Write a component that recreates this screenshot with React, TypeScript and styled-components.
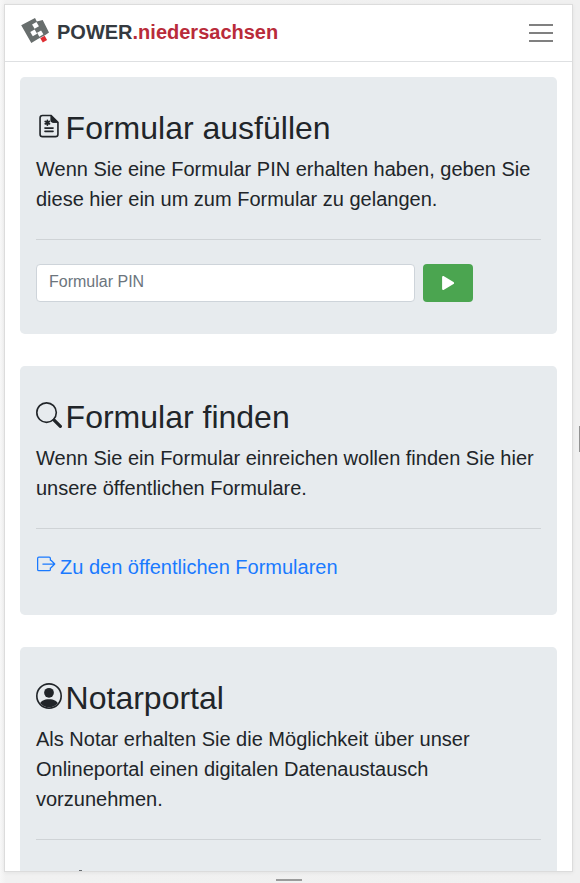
import React from "react";
import styled, { createGlobalStyle } from "styled-components";

const GlobalStyle = createGlobalStyle`
  *, *::before, *::after { box-sizing: border-box; }
  html, body { margin: 0; height: 100%; overflow: hidden; }
  body {
    font-family: "Liberation Sans", Arial, sans-serif;
    font-size: 16px;
    line-height: 1.5;
    color: #212529;
    background: #f0f0f0;
  }
`;

const Stage = styled.div`
  position: relative;
  width: 580px;
  height: 883px;
  padding: 4px 0 0 4px;
  background: linear-gradient(to right, #f7f7f7, #f1f1f1 6px, #f0f0f0 100%);
`;

const Device = styled.div`
  width: 569px;
  height: 868px;
  overflow: hidden;
  background: #fff;
  border: 1px solid #dcdcdc;
  box-shadow: 0 1px 4px rgba(0, 0, 0, 0.06);
`;

const Navbar = styled.header`
  display: flex;
  align-items: flex-start;
  justify-content: space-between;
  height: 57px;
  padding: 11px 19px 0 16px;
  border-bottom: 1px solid #dee0e2;
`;

const Brand = styled.div`
  display: flex;
  align-items: flex-start;
  gap: 8px;
  padding-top: 1px;
  font-size: 20px;
  font-weight: 700;
  line-height: 30px;
  color: #343a40;
`;

const BrandAccent = styled.span`
  color: #b92b3a;
`;

const MenuButton = styled.button`
  display: flex;
  flex-direction: column;
  gap: 6px;
  width: 24px;
  margin-top: 8px;
  padding: 0;
  border: 0;
  background: none;
`;

const MenuBar = styled.span`
  height: 2px;
  background: #808080;
`;

const Content = styled.main`
  padding: 15px 15px 0;
`;

const Panel = styled.section`
  padding: 32px 16px;
  margin-bottom: 32px;
  border-radius: 4.8px;
  background: #e7ebee;
`;

const Title = styled.h2`
  display: flex;
  align-items: flex-start;
  gap: 3.6px;
  margin: 0 0 7px;
  font-size: 32px;
  font-weight: 400;
  line-height: 38px;
`;

const TitleIcon = styled.svg`
  flex: none;
  width: 26px;
  height: 26px;
  margin-top: 4px;
`;

const Lead = styled.p`
  margin: 0;
  padding-bottom: 1px;
  font-size: 20px;
  line-height: 30px;
`;

const Divider = styled.hr`
  margin: 24px 0;
  border: 0;
  border-top: 1px solid #cfd3d6;
`;

const PinForm = styled.form`
  display: flex;
  gap: 8px;
`;

const PinInput = styled.input`
  width: 379px;
  height: 38px;
  padding: 5px 12px 7px;
  border: 1px solid #ced4da;
  border-radius: 4px;
  background: #fff;
  font: inherit;
  line-height: 24px;
  &::placeholder { color: #6c757d; opacity: 1; }
`;

const SubmitButton = styled.button`
  display: flex;
  align-items: center;
  justify-content: center;
  width: 50px;
  height: 38px;
  padding: 0;
  border: 0;
  border-radius: 4px;
  background: #4ba550;
`;

const FormsLink = styled.a`
  display: flex;
  gap: 4px;
  margin-top: -1px;
  padding-bottom: 1px;
  font-size: 20px;
  line-height: 30px;
  color: #1a7aff;
  text-decoration: none;
`;

const LinkIcon = styled.svg`
  flex: none;
  width: 20px;
  height: 20px;
  margin-top: 2px;
`;

const NextRow = styled.div`
  height: 30px;
  padding: 6px 0 0 43px;
`;

const RowTip = styled.span`
  display: block;
  width: 3px;
  height: 1px;
  background: #6a6e72;
`;

const BottomHandle = styled.div`
  position: absolute;
  left: 276px;
  bottom: 2px;
  width: 26px;
  height: 2px;
  background: #9b9b9b;
`;

const SideHandle = styled.div`
  position: absolute;
  right: 0;
  top: 426px;
  width: 1px;
  height: 26px;
  background: #929292;
`;

const Logo = () => (
  <svg width="28" height="28" viewBox="0 0 28 28">
    <path fill="#686e6d" d="M0.200 8.200 L14 1 L15.800 4.600 L21.700 3 L28 15.400 L24 18.200 L17.300 21.800 L10.300 26 Z" />
    <g fill="#fff">
      <rect x="12" y="5.900" width="5" height="5" transform="rotate(-30 14.500 8.400)" />
      <rect x="10.200" y="13.300" width="5" height="5" transform="rotate(-30 12.700 15.800)" />
      <rect x="17" y="14.100" width="4.600" height="4.600" transform="rotate(-30 19.500 16.600)" />
    </g>
    <rect x="20.200" y="19.700" width="5" height="5" transform="rotate(-30 22.700 22.200)" fill="#df2d32" />
  </svg>
);

const DocumentIcon = () => (
  <TitleIcon viewBox="0 0 16 16" fill="currentColor">
    <path fillRule="evenodd" d="M4 1h5.5L14 5.5V13a2 2 0 0 1-2 2H4a2 2 0 0 1-2-2V3a2 2 0 0 1 2-2zm0 1a1 1 0 0 0-1 1v10a1 1 0 0 0 1 1h8a1 1 0 0 0 1-1V6h-2.5A1.5 1.5 0 0 1 9 4.5V2H4z" />
    <path fillRule="evenodd" d="M5 11.300a.5.5 0 0 1 .5-.5h5a.5.5 0 0 1 0 1h-5a.5.5 0 0 1-.5-.5zm0-2a.5.5 0 0 1 .5-.5h5a.5.5 0 0 1 0 1h-5a.5.5 0 0 1-.5-.5z" />
    <path fill="none" stroke="currentColor" strokeWidth="1.1" strokeLinecap="round" d="M7 4.500v2.900M5.700 5.200l2.600 1.500M8.300 5.200l-2.600 1.500" />
    <path d="M9 1.400L13.600 6H10.500A1.500 1.500 0 0 1 9 4.500z" />
  </TitleIcon>
);

const SearchIcon = () => (
  <TitleIcon viewBox="0 0 16 16" fill="currentColor">
    <path fillRule="evenodd" d="M10.442 10.442a1 1 0 0 1 1.415 0l3.85 3.85a1 1 0 0 1-1.414 1.415l-3.85-3.85a1 1 0 0 1 0-1.415z" />
    <path fillRule="evenodd" d="M6.5 12a5.5 5.5 0 1 0 0-11 5.5 5.5 0 0 0 0 11zM13 6.5a6.5 6.5 0 1 1-13 0 6.5 6.5 0 0 1 13 0z" />
  </TitleIcon>
);

const PersonIcon = () => (
  <TitleIcon viewBox="0 0 16 16" fill="currentColor">
    <path d="M13.468 12.37C12.758 11.226 11.195 10 8 10s-4.757 1.225-5.468 2.37A6.987 6.987 0 0 0 8 15a6.987 6.987 0 0 0 5.468-2.63z" />
    <path fillRule="evenodd" d="M8 9a3 3 0 1 0 0-6 3 3 0 0 0 0 6z" />
    <path fillRule="evenodd" d="M8 1a7 7 0 1 0 0 14A7 7 0 0 0 8 1zM0 8a8 8 0 1 1 16 0A8 8 0 0 1 0 8z" />
  </TitleIcon>
);

const ExitIcon = () => (
  <LinkIcon viewBox="0 0 16 16" fill="none" stroke="currentColor" strokeLinecap="round" strokeLinejoin="round">
    <path d="M11.5 5V3.500a1 1 0 0 0-1-1H2.300a1 1 0 0 0-1 1v8.800a1 1 0 0 0 1 1h8.200a1 1 0 0 0 1-1V11" />
    <path d="M5.500 8h9M12.200 5.200L15 8l-2.800 2.800" />
  </LinkIcon>
);

const PlayIcon = () => (
  <svg width="16" height="16" viewBox="0 0 16 16" fill="#fff">
    <path d="M11.596 8.697l-6.363 3.692c-.54.313-1.233-.066-1.233-.697V4.308c0-.63.692-1.010 1.233-.696l6.363 3.692a.802.802 0 0 1 0 1.393z" transform="translate(-3.9 -4.3) scale(1.5 1.54)" />
  </svg>
);

export default function App() {
  return (
    <>
      <GlobalStyle />
      <Stage>
        <Device>
          <Navbar>
            <Brand>
              <Logo />
              <span>POWER<BrandAccent>.niedersachsen</BrandAccent></span>
            </Brand>
            <MenuButton aria-label="Menü">
              <MenuBar /><MenuBar /><MenuBar />
            </MenuButton>
          </Navbar>
          <Content>
            <Panel>
              <Title><DocumentIcon />Formular ausfüllen</Title>
              <Lead>Wenn Sie eine Formular PIN erhalten haben, geben Sie diese hier ein um zum Formular zu gelangen.</Lead>
              <Divider />
              <PinForm>
                <PinInput placeholder="Formular PIN" />
                <SubmitButton type="button" aria-label="Start"><PlayIcon /></SubmitButton>
              </PinForm>
            </Panel>
            <Panel>
              <Title><SearchIcon />Formular finden</Title>
              <Lead>Wenn Sie ein Formular einreichen wollen finden Sie hier unsere öffentlichen Formulare.</Lead>
              <Divider />
              <FormsLink href="#"><ExitIcon />Zu den öffentlichen Formularen</FormsLink>
            </Panel>
            <Panel>
              <Title><PersonIcon />Notarportal</Title>
              <Lead>Als Notar erhalten Sie die Möglichkeit über unser Onlineportal einen digitalen Datenaustausch vorzunehmen.</Lead>
              <Divider />
              <NextRow><RowTip /></NextRow>
            </Panel>
          </Content>
        </Device>
        <BottomHandle />
        <SideHandle />
      </Stage>
    </>
  );
}
